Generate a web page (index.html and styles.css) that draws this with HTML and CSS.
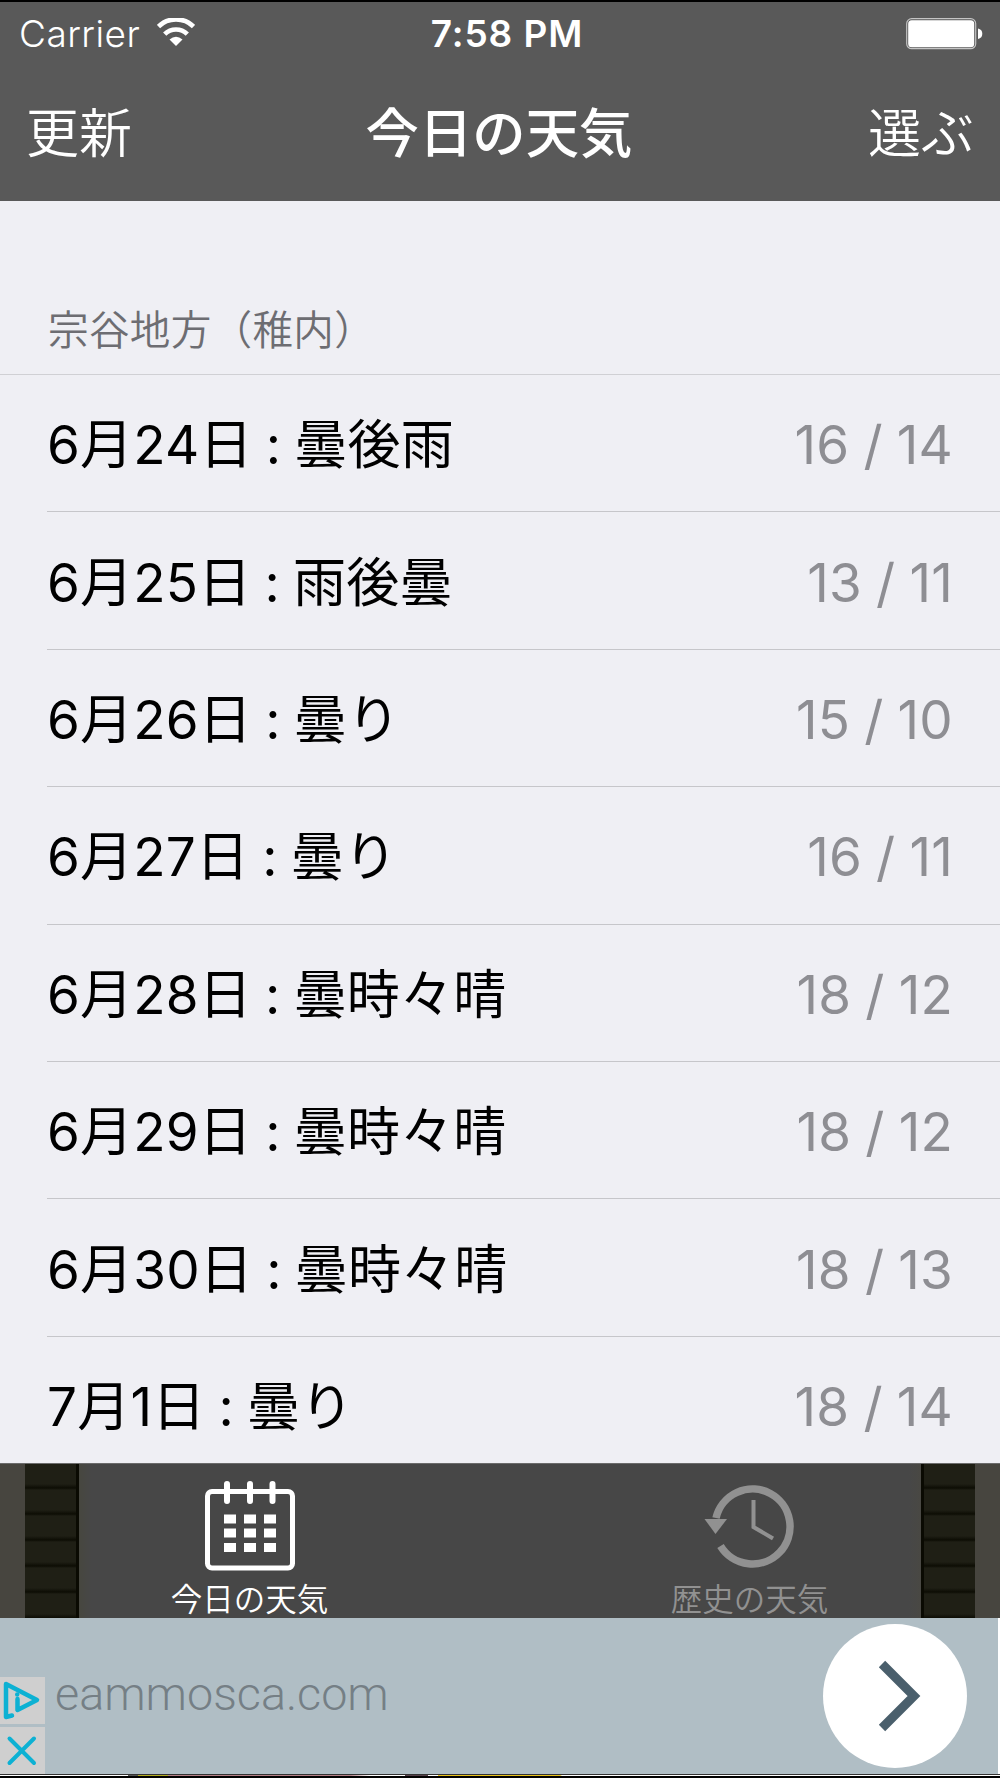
FILE: index.html
```html
<!DOCTYPE html>
<html lang="ja">
<head>
  <meta charset="UTF-8">
  <meta name="viewport" content="width=device-width, initial-scale=1.0">
  <title>今日の天気</title>
  <link rel="stylesheet" href="styles.css">
</head>
<body>
  <header class="header">
    <div class="status-bar">
      <div class="carrier">
        <span>Carrier</span>
        <svg class="wifi" width="38" height="28" viewBox="0 0 38 28">
          <path d="M1.5 8.5A25 25 0 0 1 36.500 8.500" fill="none" stroke="#fff" stroke-width="4.600"/>
          <path d="M7.700 16.200A16 16 0 0 1 30.300 16.200" fill="none" stroke="#fff" stroke-width="4.600"/>
          <path d="M12.500 21.500Q19 16 25.500 21.500L19 28Z" fill="#fff"/>
        </svg>
      </div>
      <div class="clock">7:58 PM</div>
      <div class="battery">
        <svg width="77" height="32" viewBox="0 0 77 32">
          <rect x="0.700" y="0.700" width="69" height="30" rx="5" fill="none" stroke="#c4c4c4" stroke-width="1.200"/>
          <rect x="2.200" y="2.200" width="66" height="27" rx="3.500" fill="#fff"/>
          <path d="M72 10.500Q76.300 11.500 76.300 15.700T72 21Z" fill="#fff"/>
        </svg>
      </div>
    </div>
    <nav class="nav-bar">
      <span class="nav-button">更新</span>
      <h1 class="nav-title">今日の天気</h1>
      <span class="nav-button nav-right">選ぶ</span>
    </nav>
  </header>

  <main class="forecast">
    <h2 class="area">宗谷地方（稚内）</h2>
    <ul class="days">
      <li class="day"><span>6月24日 : 曇後雨</span><span class="temp">16 / 14</span></li>
      <li class="day"><span>6月25日 : 雨後曇</span><span class="temp">13 / 11</span></li>
      <li class="day"><span>6月26日 : 曇り</span><span class="temp">15 / 10</span></li>
      <li class="day"><span>6月27日 : 曇り</span><span class="temp">16 / 11</span></li>
      <li class="day"><span>6月28日 : 曇時々晴</span><span class="temp">18 / 12</span></li>
      <li class="day"><span>6月29日 : 曇時々晴</span><span class="temp">18 / 12</span></li>
      <li class="day"><span>6月30日 : 曇時々晴</span><span class="temp">18 / 13</span></li>
      <li class="day"><span>7月1日 : 曇り</span><span class="temp">18 / 14</span></li>
    </ul>
  </main>

  <footer class="tab-bar">
    <div class="edge"></div>
    <div class="mat mat-left"></div>
    <div class="tabs">
      <div class="tab active">
        <svg class="tab-icon" width="92" height="92" viewBox="0 0 92 92">
          <rect x="3.500" y="10.500" width="85" height="76.500" rx="4.500" fill="none" stroke="#fff" stroke-width="5"/>
          <path d="M23 3V20M46 3V20M68.500 3V20" stroke="#fff" stroke-width="6" stroke-linecap="round"/>
          <path d="M20 38H32M40 38H52M60 38H72M20 52H32M40 52H52M60 52H72M20 66.500H32M40 66.500H52M60 66.500H72" stroke="#fff" stroke-width="9"/>
        </svg>
        <span>今日の天気</span>
      </div>
      <div class="tab">
        <svg class="tab-icon" width="92" height="92" viewBox="0 0 92 92">
          <path d="M12 37A37.500 37.500 0 1 1 16.500 65" fill="none" stroke="#919191" stroke-width="7.500"/>
          <path d="M0.500 38H23L11.500 53Z" fill="#919191"/>
          <path d="M49.500 19V46L69 57.500" fill="none" stroke="#919191" stroke-width="4"/>
        </svg>
        <span>歴史の天気</span>
      </div>
    </div>
    <div class="mat mat-right"></div>
    <div class="edge"></div>
  </footer>

  <section class="ad">
    <div class="ad-badges">
      <svg class="badge" width="45" height="47" viewBox="0 0 45 47">
        <path d="M12 38.500L6 40V7L37 23L17.500 33V22" fill="none" stroke="#0db1d3" stroke-width="4.500" stroke-linejoin="round" stroke-linecap="round"/>
        <circle cx="17.200" cy="17.500" r="2.200" fill="#0db1d3"/>
      </svg>
      <svg class="badge" width="45" height="47" viewBox="0 0 45 47">
        <path d="M9.500 11.500L34 36M34 11.500L9.500 36" fill="none" stroke="#0db1d3" stroke-width="4" stroke-linecap="round"/>
      </svg>
    </div>
    <span class="ad-domain">eammosca.com</span>
    <div class="ad-go">
      <svg width="144" height="144" viewBox="0 0 144 144">
        <path d="M59 40L91 72L59 104" fill="none" stroke="#4a5f6c" stroke-width="9"/>
      </svg>
    </div>
  </section>
  <div class="ad-strip"></div>
</body>
</html>
```

FILE: styles.css
```css
:root {
  --bar: #595959;
  --tab: #474747;
  --bg: #efeff4;
  --line: #c6c6ca;
}
* {
  box-sizing: border-box;
}
body {
  margin: 0;
  width: 1000px;
  height: 1778px;
  overflow: hidden;
  display: flex;
  flex-direction: column;
  background: var(--bg);
  font-family: Inter, "Noto Sans CJK JP", sans-serif;
  color: #000;
}
.header {
  height: 201px;
  flex: none;
  background: var(--bar);
  border-top: 2px solid #000;
  color: #fff;
}
.status-bar {
  height: 64px;
  display: grid;
  grid-template-columns: 1fr auto 1fr;
  align-items: center;
  padding: 0 17px 0 19px;
  font-size: 37px;
  line-height: 64px;
}
.carrier {
  display: flex;
  align-items: center;
  gap: 17px;
  font-weight: 350;
  letter-spacing: 0.450px;
}
.wifi {
  margin-top: -4px;
}
.clock {
  padding-left: 12px;
  font-weight: 560;
  letter-spacing: 0.9px;
}
.battery {
  display: flex;
  justify-content: flex-end;
}
.nav-bar {
  height: 135px;
  display: grid;
  grid-template-columns: 1fr auto 1fr;
  align-items: center;
  padding: 0 26px;
  font-size: 53px;
  line-height: 80px;
}
.nav-button {
  font-weight: 350;
}
.nav-title {
  margin: 0;
  padding-right: 2px;
  font-size: 53.4px;
  font-weight: 500;
}
.nav-right {
  text-align: right;
}
.forecast {
  flex: 1;
  min-height: 0;
}
.area {
  height: 174px;
  margin: 0;
  padding: 100px 48px 0;
  border-bottom: 1px solid #d0d0d4;
  color: #6d6d72;
  font-size: 40.6px;
  font-weight: 350;
  letter-spacing: 0.3px;
  line-height: 60px;
}
.days {
  margin: 0;
  padding: 0 0 0 47px;
  list-style: none;
}
.day {
  height: 137.400px;
  display: flex;
  justify-content: space-between;
  align-items: center;
  padding: 4px 47px 0 0;
  border-bottom: 1px solid var(--line);
  font-size: 53px;
  font-weight: 380;
  line-height: 80px;
  letter-spacing: 0.2px;
  white-space: pre;
  word-spacing: -2px;
}
.day:last-child {
  border-bottom: none;
}
.temp {
  color: #8e8e93;
  word-spacing: -1px;
}
.tab-bar {
  height: 155px;
  flex: none;
  display: flex;
  background: var(--tab);
  border-top: 1px solid #6b6b6b;
}
.edge {
  width: 25px;
  background: #47453f;
}
.mat {
  width: 54px;
  background:
    repeating-linear-gradient(to bottom, transparent 0 20px, #0d0d04 24px, transparent 26px),
    #1f1f15;
}
.mat-left {
  border-right: 3px solid #0a0a02;
}
.mat-right {
  border-left: 3px solid #0a0a02;
}
.tabs {
  flex: 1;
  display: flex;
  justify-content: space-between;
  padding: 0 91px 0 90px;
  background: linear-gradient(to right, #47473f, var(--tab) 12px calc(100% - 12px), #494843);
}
.tab {
  width: 161px;
  padding-top: 17px;
  display: flex;
  flex-direction: column;
  align-items: center;
  color: #919191;
  font-size: 31.500px;
  font-weight: 350;
  line-height: 46px;
  white-space: nowrap;
}
.tab.active {
  color: #fff;
}
.tab-icon {
  flex: none;
  margin-bottom: 4px;
}
.ad {
  height: 156px;
  flex: none;
  display: flex;
  background: #b0bec5;
  border-right: 2px solid #fff;
}
.ad-badges {
  display: flex;
  flex-direction: column;
  justify-content: flex-end;
  gap: 3px;
}
.badge {
  background: #cfcfcf;
}
.ad-domain {
  flex: 1;
  padding: 48px 0 0 10px;
  color: #757f85;
  font-family: Roboto, sans-serif;
  font-size: 46.700px;
  font-weight: 300;
  line-height: 56px;
}
.ad-go {
  width: 144px;
  height: 144px;
  margin: 6px 31px 0 0;
  border-radius: 50%;
  background: #fff;
}
.ad-strip {
  height: 4px;
  flex: none;
  border-top: 1px solid #333;
  border-bottom: 2px solid #000;
  background: linear-gradient(to right, #fff 128px, #555 128px 138px, #b5ad20 138px 168px, #b58087 168px 350px, #fff 370px 405px, #56404a 405px 428px, #fff 428px 438px, #ebc31a 438px 560px, #fff 562px);
}
```
